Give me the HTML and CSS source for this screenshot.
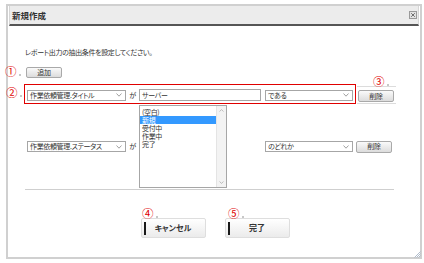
FILE: index.html
```html
<!DOCTYPE html>
<html lang="ja">
<head>
<meta charset="utf-8">
<title>新規作成</title>
<link rel="stylesheet" href="styles.css">
</head>
<body>
<div class="dialog">
  <div class="header">
    <span class="title">新規作成</span>
    <span class="close"><svg width="8" height="8" viewBox="0 0 8 8"><rect x="0.5" y="0.5" width="7" height="7" fill="#e2e2e2" stroke="#9a9a9a"/><path d="M2.2 2.2 L5.8 5.8 M5.8 2.2 L2.2 5.8" stroke="#6e6e6e" stroke-width="1"/></svg></span>
  </div>
  <div class="content">
    <p class="intro">レポート出力の抽出条件を設定してください。</p>
    <div class="add-row"><span class="btn btn-add">追加</span></div>
    <div class="row row1">
      <div class="hl">
        <div class="select sel-field"><span>作業依頼管理.タイトル</span><svg class="chev" width="6" height="4" viewBox="0 0 6 4"><polyline points="0.5,0.5 3,3.2 5.5,0.5" fill="none" stroke="#8a8a8a" stroke-width="0.8"/></svg></div>
        <span class="ga">が</span>
        <div class="input">サーバー</div>
        <div class="select sel-op"><span>である</span><svg class="chev" width="6" height="4" viewBox="0 0 6 4"><polyline points="0.5,0.5 3,3.2 5.5,0.5" fill="none" stroke="#8a8a8a" stroke-width="0.8"/></svg></div>
      </div>
      <div class="del-cell"><span class="btn btn-del">削除</span></div>
    </div>
    <div class="row row2">
      <div class="select sel-field"><span>作業依頼管理.ステータス</span><svg class="chev" width="6" height="4" viewBox="0 0 6 4"><polyline points="0.5,0.5 3,3.2 5.5,0.5" fill="none" stroke="#8a8a8a" stroke-width="0.8"/></svg></div>
      <span class="ga">が</span>
      <div class="value-cell">
        <div class="listbox">
          <div class="items">
            <div class="item">(空白)</div>
            <div class="item sel">新規</div>
            <div class="item">受付中</div>
            <div class="item">作業中</div>
            <div class="item">完了</div>
          </div>
          <div class="scroll">
            <svg width="5" height="3" viewBox="0 0 5 3"><polyline points="0.5,2.5 2.5,0.6 4.5,2.5" fill="none" stroke="#b0b0b0" stroke-width="0.8"/></svg>
            <svg width="5" height="3" viewBox="0 0 5 3"><polyline points="0.5,0.5 2.5,2.4 4.5,0.5" fill="none" stroke="#b0b0b0" stroke-width="0.8"/></svg>
          </div>
        </div>
      </div>
      <div class="select sel-op"><span>のどれか</span><svg class="chev" width="6" height="4" viewBox="0 0 6 4"><polyline points="0.5,0.5 3,3.2 5.5,0.5" fill="none" stroke="#8a8a8a" stroke-width="0.8"/></svg></div>
      <span class="btn btn-del btn-del2">削除</span>
    </div>
    <div class="sep"></div>
  </div>
  <div class="actions">
    <span class="btn-big">キャンセル</span>
    <span class="btn-big">完了</span>
  </div>
  <span class="mark m1">①</span>
  <span class="mark m2">②</span>
  <span class="mark m3">③</span>
  <span class="mark m4">④</span>
  <span class="mark m5">⑤</span>
  <svg class="grip" width="7" height="7" viewBox="0 0 7 7"><path d="M6.5 0.5 L0.5 6.5 M6.5 2.5 L2.5 6.5 M6.5 4.5 L4.5 6.5" stroke="#a8b6c6" stroke-width="0.9"/></svg>
</div>
</body>
</html>
```
FILE: styles.css
```css
body {
  margin: 0;
  background: #fff;
  color: #333;
  font-family: "Noto Sans CJK JP", "Noto Sans", sans-serif;
  font-feature-settings: "palt";
  letter-spacing: -0.35px;
}

.dialog {
  position: relative;
  box-sizing: border-box;
  width: 416px;
  height: 255px;
  margin: 4px 0 0 6px;
  border: 2px solid #d0d0d0;
}

.header {
  display: flex;
  align-items: center;
  justify-content: space-between;
  height: 18px;
  margin: 0 1px;
  padding: 0 1px 0 2px;
  background: #ececec;
  border-left: 1px solid #d6d6d6;
  border-right: 1px solid #d6d6d6;
  border-bottom: 2px solid #555;
}

.title {
  font-size: 8.5px;
  font-weight: bold;
  line-height: 18px;
  letter-spacing: 0;
  color: #333;
}

.close {
  display: flex;
}

.content {
  padding-left: 16px;
}

.intro {
  margin: 21px 0 0 1px;
  font-size: 7px;
  line-height: 11px;
}

.add-row {
  display: flex;
  margin-top: 9px;
}

.btn {
  display: inline-flex;
  align-items: center;
  justify-content: center;
  box-sizing: border-box;
  width: 36px;
  border: 1px solid #a9a9a9;
  border-radius: 2px;
  background: linear-gradient(#fafafa, #dcdcdc);
  font-size: 7px;
  line-height: 1;
  color: #333;
}

.btn-add {
  height: 11px;
  margin-left: 2px;
}

.btn-del {
  height: 12px;
}

.row {
  display: flex;
}

.row1 {
  align-items: flex-end;
  margin-top: 6px;
}

.hl {
  display: flex;
  align-items: center;
  box-sizing: border-box;
  width: 332px;
  height: 20px;
  padding: 2px 1px 0 2px;
  border: 1px solid #e00000;
}

.select {
  display: flex;
  align-items: center;
  justify-content: space-between;
  box-sizing: border-box;
  height: 11px;
  padding: 0 3px 0 2px;
  border: 1px solid #a6a6a6;
  background: #fff;
  font-size: 7px;
  line-height: 1;
  white-space: nowrap;
}

.sel-field {
  width: 99px;
}

.sel-op {
  width: 88px;
  margin-left: 4px;
}

.ga {
  width: 13px;
  text-align: center;
  font-size: 7px;
  line-height: 1;
}

.input {
  display: flex;
  align-items: center;
  box-sizing: border-box;
  width: 122px;
  height: 12px;
  padding-left: 2px;
  border: 1px solid #a6a6a6;
  font-size: 7px;
  line-height: 1;
}

.del-cell {
  display: flex;
  align-items: flex-end;
  box-sizing: border-box;
  width: 39px;
  height: 18px;
  margin-left: 1px;
  padding: 0 0 1px 1px;
  border-top: 1px solid #dcdcdc;
  border-bottom: 1px solid #dcdcdc;
}

.row2 {
  align-items: center;
  margin-top: 1px;
  padding-left: 3px;
}

.value-cell {
  width: 122px;
}

.listbox {
  display: flex;
  box-sizing: border-box;
  width: 88px;
  height: 83px;
  border: 1px solid #a6a6a6;
  background: #fff;
}

.items {
  flex: 1;
  padding-top: 2px;
}

.item {
  height: 8px;
  padding-left: 2px;
  font-size: 7px;
  line-height: 8px;
  white-space: nowrap;
}

.item.sel {
  background: #3399ff;
  color: #fff;
}

.scroll {
  display: flex;
  flex-direction: column;
  justify-content: space-between;
  align-items: center;
  width: 9px;
  padding: 3px 0;
  background: #f3f3f3;
  border-left: 1px solid #e4e4e4;
}

.btn-del2 {
  margin-left: 3px;
}

.sep {
  width: 369px;
  height: 1px;
  margin: 1px 0 0 1px;
  background: #cfcfcf;
}

.actions {
  display: flex;
  justify-content: center;
  gap: 19px;
  margin-top: 28px;
  padding-left: 2px;
}

.btn-big {
  position: relative;
  display: flex;
  align-items: center;
  justify-content: center;
  box-sizing: border-box;
  width: 65px;
  height: 20px;
  border: 1px solid #dedede;
  border-radius: 2px;
  background: linear-gradient(#ffffff, #ebebeb);
  font-size: 8px;
  font-weight: bold;
  line-height: 1;
  letter-spacing: 0;
  color: #333;
}

.btn-big::before {
  content: "";
  position: absolute;
  left: 2px;
  top: 3px;
  width: 2px;
  height: 13px;
  background: #1a1a1a;
}

.mark {
  position: absolute;
  font-size: 11.5px;
  line-height: 11px;
  letter-spacing: 0;
  color: #e00000;
}

.mark::after {
  content: "";
  position: absolute;
  right: -4px;
  bottom: 1px;
  width: 2px;
  height: 2px;
  background: #c8c8c8;
}

.m1 { left: -3px; top: 60px; }
.m2 { left: -2px; top: 81px; }
.m3 { left: 365px; top: 70px; }
.m4 { left: 134px; top: 202px; }
.m5 { left: 220px; top: 202px; }

.grip {
  position: absolute;
  right: -1px;
  bottom: -1px;
}
```
